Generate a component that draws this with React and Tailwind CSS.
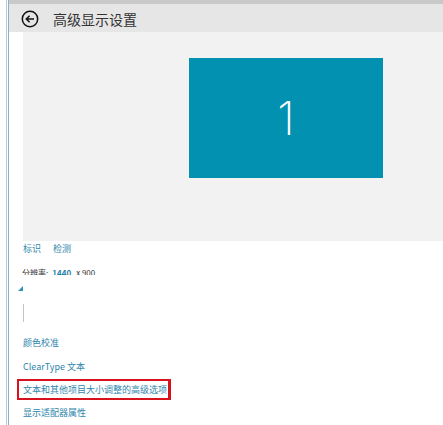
import React from 'react';

const linkClass = 'text-[9px] leading-[12px] text-[#2f86ad]';

const App = () => {
  return (
    <div className="w-[443px] h-[425px] overflow-hidden bg-white flex font-['Noto_Sans_CJK_SC','Liberation_Sans',sans-serif]">
      {/* window edge */}
      <div className="w-[6px] shrink-0" />
      <div className="w-[1px] shrink-0 bg-[#b9cbd6]" />
      <div className="w-[1px] shrink-0 bg-white" />
      <div className="w-[1px] shrink-0 bg-[#7fb2d3]" />

      <div className="flex-1 min-w-0 flex flex-col">
        <div className="h-[4px] shrink-0 bg-[#c9c9c9]" />
        <div className="h-[28px] shrink-0 bg-[#e6e6e6] flex items-center pl-[12px] pt-[2px] gap-[14px]">
          <svg width="18" height="18" viewBox="0 0 18 18" fill="none" stroke="#111" strokeWidth="1.5">
            <circle cx="9" cy="9" r="7.7" />
            <path d="M13 9H5.5M8.6 5.8 5.3 9l3.3 3.2" />
          </svg>
          <span className="text-[14px] leading-[18px] text-[#333]">高级显示设置</span>
        </div>

        <div className="pl-[14px]">
          <div className="h-[209px] bg-[#f2f2f3] pl-[166px] pt-[26px]">
            <div className="w-[194px] h-[120px] bg-[#0391b2] flex items-center justify-center">
              <span className="text-[46px] leading-none font-extralight text-white font-['Inter',sans-serif]">1</span>
            </div>
          </div>

          <div className="flex gap-[12px] mt-[2px] h-[12px] items-center">
            <span className={linkClass}>标识</span>
            <span className={linkClass}>检测</span>
          </div>
          {/* resolution line is cut off in the capture */}
          <div className="mt-[13px] -ml-[1px] flex h-[7px] overflow-hidden text-[8px] leading-[10px] text-[#333]">
            <span>分辨率:</span>
            <span className="text-[#1f7fa8] font-bold ml-[4px]">1440</span>
            <span className="ml-[5px]">x 900</span>
          </div>
          <div className="-ml-[5px] mt-[11px] w-0 h-0 border-l-[5px] border-l-transparent border-b-[5px] border-b-[#2f96b8]" />
          <div className="mt-[13px] w-[1px] h-[18px] bg-[#c4c4c4]" />

          <div className={`${linkClass} mt-[15px]`}>颜色校准</div>
          <div className={`${linkClass} mt-[12px]`}>ClearType 文本</div>
          <div className={`${linkClass} -ml-[6px] mt-[6px] w-[154px] h-[21px] flex items-center pl-[4px] border-2 border-r-[3px] border-[#d8121c] whitespace-nowrap`}>
            文本和其他项目大小调整的高级选项
          </div>
          <div className={`${linkClass} mt-[7px]`}>显示适配器属性</div>
        </div>
      </div>
    </div>
  );
};

export default App;
